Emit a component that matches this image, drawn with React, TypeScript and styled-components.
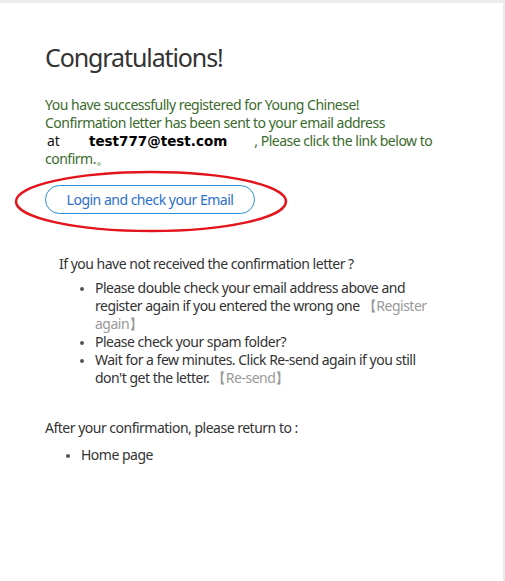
import React from "react";
import styled, { createGlobalStyle } from "styled-components";

const Global = createGlobalStyle`
  html, body { margin: 0; padding: 0; background: #ececee; }
  body { font-family: "Noto Sans", "Open Sans", Arial, sans-serif; }
`;

const Card = styled.div`
  margin-top: 3px;
  width: 503px;
  height: 578px;
  background: #ffffff;
  box-sizing: border-box;
  padding: 37px 0 0 45px;
  color: #333333;
  font-size: 14px;
  letter-spacing: -0.5px;
`;

const Title = styled.h1`
  margin: 0;
  font-size: 25px;
  font-weight: 400;
  line-height: 34px;
  letter-spacing: -1.1px;
  color: #333333;
`;

const Notice = styled.div`
  margin-top: 22px;
  color: #3a6a2c;
  line-height: 18px;
  width: 400px;
`;

const Address = styled.span`
  color: #111111;
  padding-left: 2px;
  letter-spacing: 0;
`;

const Email = styled.b`
  font-family: "DejaVu Sans", Verdana, sans-serif;
  font-size: 13.5px;
  letter-spacing: 0;
  color: #000;
  margin: 0 27px 0 29px;
`;

const ButtonWrap = styled.div`
  position: relative;
  margin-top: 17px;
  width: 210px;
`;

const Ring = styled.svg`
  position: absolute;
  left: -31px;
  top: -15px;
  pointer-events: none;
`;

const LoginButton = styled.a`
  display: flex;
  align-items: center;
  justify-content: center;
  box-sizing: border-box;
  width: 210px;
  height: 29px;
  border: 1px solid #2a8fd6;
  border-radius: 15px;
  color: #2a6fc9;
  text-decoration: none;
  font-size: 14px;
`;

const Section = styled.div<{ $indent: number; $top: number }>`
  margin-top: ${(p) => p.$top}px;
  padding-left: ${(p) => p.$indent}px;
  line-height: 18px;
  color: #333333;
`;

const List = styled.ul<{ $gap: number }>`
  margin: ${(p) => p.$gap}px 0 0 0;
  padding-left: 36px;
  width: 336px;
  li { line-height: 18px; }
  li::marker { color: #555; font-size: 11px; }
`;

const Muted = styled.span`
  color: #999999;
`;

export default function App() {
  return (
    <>
      <Global />
      <Card>
        <Title>Congratulations!</Title>
        <Notice>
          You have successfully registered for Young Chinese!
          <br />
          Confirmation letter has been sent to your email address
          <br />
          <Address>at</Address>
          <Email>test777@test.com</Email>, Please click the link below to confirm.。
        </Notice>
        <ButtonWrap>
          <Ring width="274" height="63" viewBox="0 0 274 63">
            <ellipse cx="137" cy="31.5" rx="135" ry="29.5" fill="none" stroke="#e3141b" strokeWidth="2.5" />
          </Ring>
          <LoginButton href="#">Login and check your Email</LoginButton>
        </ButtonWrap>
        <Section $indent={14} $top={41}>
          If you have not received the confirmation letter ?
          <List $gap={6}>
            <li>
              Please double check your email address above and register again if you entered the wrong one <Muted>【Register again】</Muted>
            </li>
            <li>Please check your spam folder?</li>
            <li>
              Wait for a few minutes. Click Re-send again if you still don't get the letter. <Muted>【Re-send】</Muted>
            </li>
          </List>
        </Section>
        <Section $indent={0} $top={32}>
          After your confirmation, please return to :
          <List $gap={9}>
            <li>Home page</li>
          </List>
        </Section>
      </Card>
    </>
  );
}
